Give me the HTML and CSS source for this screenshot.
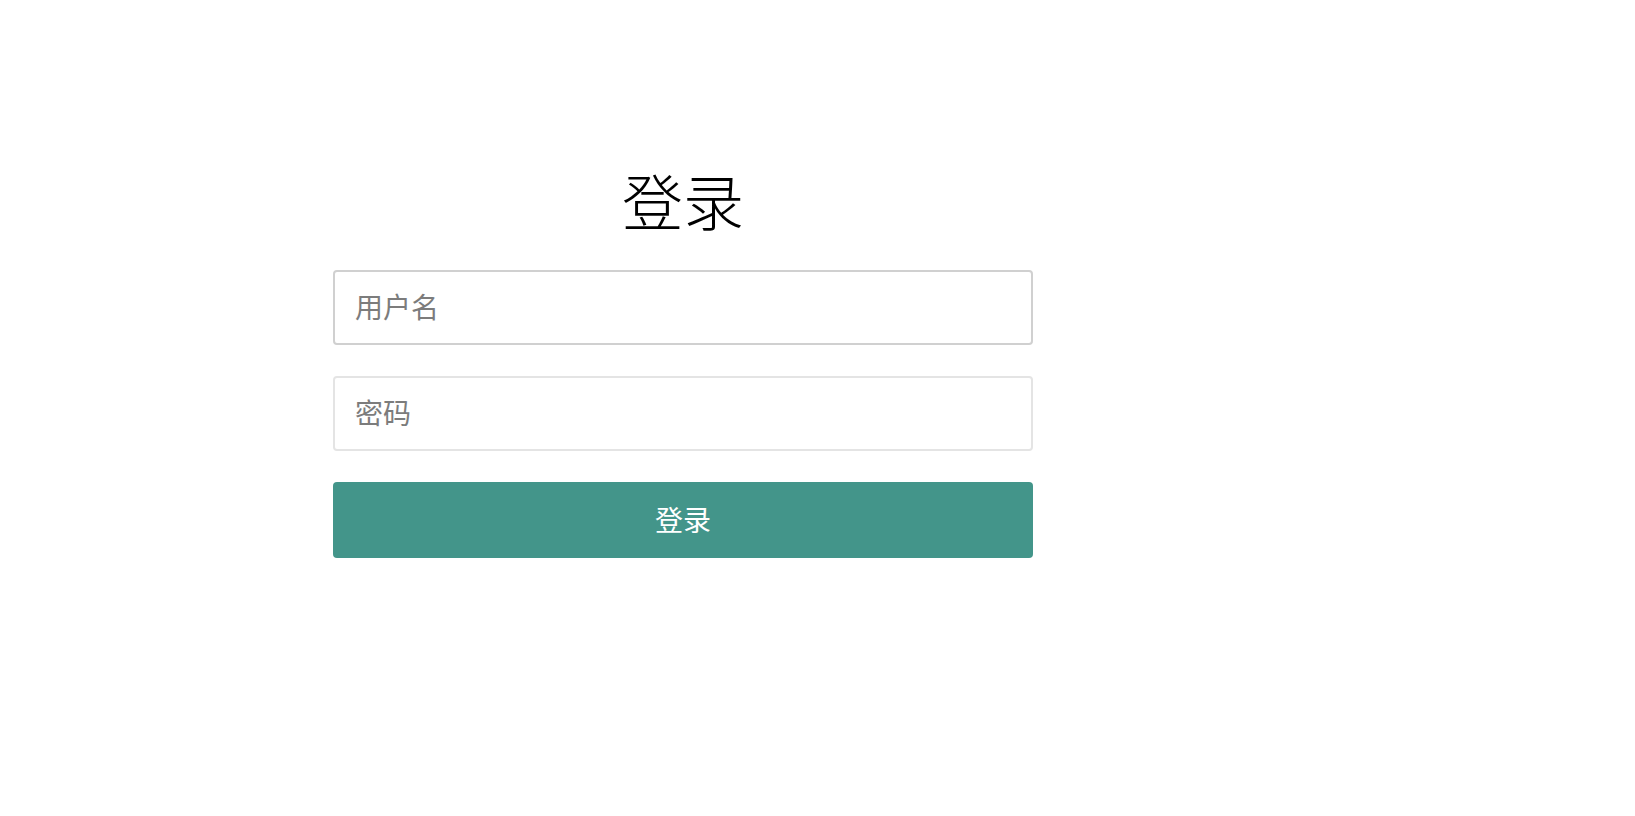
FILE: index.html
```html
<!DOCTYPE html>
<html lang="zh-CN">
<head>
    <meta charset="UTF-8">
    <meta name="viewport" content="width=device-width, initial-scale=1.0">
    <title>登录</title>
    <link rel="stylesheet" href="styles.css">
</head>
<body>
    <div class="login">
        <h1>登录</h1>
        <form>
            <input type="text" class="focus" name="username" placeholder="用户名">
            <input type="password" name="password" placeholder="密码">
            <button type="submit">登录</button>
        </form>
    </div>
</body>
</html>
```

FILE: styles.css
```css
body {
    font-family: "Noto Sans CJK SC", "Noto Sans", sans-serif;
    background-color: #fff;
    margin: 0;
    padding: 0;
}
.login {
    width: 700px;
    margin-left: 333px;
    padding-top: 164px;
}
h1 {
    margin: 0 0 34px;
    font-size: 61px;
    font-weight: 300;
    line-height: 72px;
    text-align: center;
    color: #000;
}
form {
    display: flex;
    flex-direction: column;
    gap: 31px;
}
input {
    box-sizing: border-box;
    height: 75px;
    padding: 0 20px 3px;
    font-family: inherit;
    font-size: 28px;
    color: #333;
    border: 2px solid #e4e4e4;
    border-radius: 4px;
    outline: none;
}
input.focus {
    border-color: #d0d0d0;
}
input::placeholder {
    color: #7c7c7c;
}
button {
    height: 76px;
    padding-bottom: 3px;
    background-color: #43958a;
    color: #fff;
    border: none;
    border-radius: 4px;
    font-family: inherit;
    font-size: 28px;
    cursor: pointer;
}
```
